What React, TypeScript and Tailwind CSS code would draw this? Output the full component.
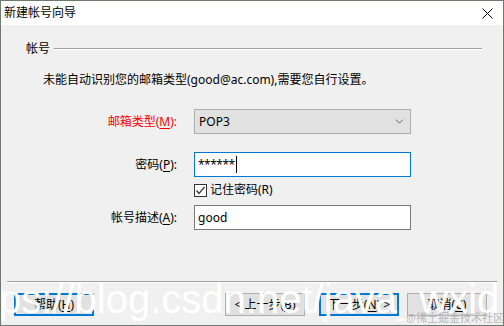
import { ChevronDown } from "lucide-react";

const ui = "font-['Noto_Sans','Noto_Sans_CJK_SC',sans-serif]";

function U({ c }: { c: string }) {
  return <span className="underline underline-offset-2">{c}</span>;
}

function Field({
  label,
  red,
  children,
}: {
  label: React.ReactNode;
  red?: boolean;
  children: React.ReactNode;
}) {
  return (
    <div className="flex items-center">
      <div
        className={`w-[176px] text-right text-[12px] leading-[16px] ${
          red ? "text-[#ff0000]" : "text-[#000]"
        }`}
      >
        {label}
      </div>
      <div className="ml-[17px] w-[217px]">{children}</div>
    </div>
  );
}

function Btn({ label, focus }: { label: React.ReactNode; focus?: boolean }) {
  return (
    <button
      className={`w-[80px] h-[23px] bg-[#e1e1e1] text-[12px] leading-[16px] text-black flex items-center justify-center ${
        focus ? "border-2 border-[#0078d7]" : "border border-[#adadad]"
      }`}
    >
      {label}
    </button>
  );
}

export default function App() {
  return (
    <div
      className={`relative w-[504px] h-[326px] overflow-hidden border border-[#6f7a6f] flex flex-col bg-[#f0f0f0] ${ui}`}
    >
      {/* title bar */}
      <div className="h-[24px] bg-white flex items-center justify-between pl-[3px] pr-[10px]">
        <span className="text-[12px] leading-[16px] text-black">新建帐号向导</span>
        <svg width="11" height="11" viewBox="0 0 11 11" className="mt-[1px]">
          <path d="M0.5 0.5 L10.5 10.5 M10.5 0.5 L0.5 10.5" stroke="#000" strokeWidth="1" />
        </svg>
      </div>

      {/* body */}
      <div className="flex-1 flex flex-col">
        <div className="mt-[16px] pl-[25px] pr-[21px] flex items-center">
          <span className="text-[12px] leading-[16px] text-black">帐号</span>
          <div className="ml-[4px] flex-1 h-[2px] border-t border-[#a0a0a0] border-b border-b-white" />
        </div>

        <div className="mt-[15px] pl-[42px] text-[12px] leading-[16px] text-black">
          未能自动识别您的邮箱类型(good@ac.com),需要您自行设置。
        </div>

        <div className="mt-[21px] flex flex-col">
          <Field
            red
            label={
              <>
                邮箱类型(<U c="M" />):
              </>
            }
          >
            <div className="h-[25px] bg-[#e1e1e1] border border-[#adadad] flex items-center justify-between pl-[4px] pr-[4px] text-[12px] text-black">
              <span>POP3</span>
              <ChevronDown className="w-[13px] h-[13px] text-[#333]" strokeWidth={1.3} />
            </div>
          </Field>

          <div className="mt-[18px]">
            <Field
              label={
                <>
                  密码(<U c="P" />):
                </>
              }
            >
              <div className="h-[25px] bg-white border border-[#0078d7] flex items-center pl-[3px] text-[12px] text-black">
                <span className="leading-none tracking-[-0.5px]">******</span>
                <span className="w-px h-[17px] bg-black ml-[1px]" />
              </div>
            </Field>
          </div>

          <div className="mt-[5px] pl-[193px] flex items-center">
            <div className="w-[13px] h-[13px] border border-[#333] bg-white flex items-center justify-center">
              <svg width="11" height="11" viewBox="0 0 11 11">
                <path d="M1.5 5.5 L4 8.5 L9.5 2" fill="none" stroke="#333" strokeWidth="1.2" />
              </svg>
            </div>
            <span className="ml-[3px] text-[12px] leading-[16px] text-black">记住密码(R)</span>
          </div>

          <div className="mt-[7px]">
            <Field
              label={
                <>
                  帐号描述(<U c="A" />):
                </>
              }
            >
              <div className="h-[25px] bg-white border border-[#7a7a7a] flex items-center pl-[3px] text-[12px] text-black">
                good
              </div>
            </Field>
          </div>
        </div>

        {/* footer */}
        <div className="mt-auto pl-[6px] pr-[6px]">
          <div className="h-[2px] border-t border-[#a0a0a0] border-b border-b-white" />
        </div>
        <div className="mt-[10px] mb-[9px] pl-[13px] pr-[16px] flex items-center">
          <Btn
            focus
            label={
              <>
                帮助(<U c="H" />)
              </>
            }
          />
          <div className="flex-1" />
          <Btn
            label={
              <>
                &lt; 上一步(<U c="B" />)
              </>
            }
          />
          <div className="w-[14px]" />
          <Btn
            focus
            label={
              <>
                下一步(<U c="N" />) &gt;
              </>
            }
          />
          <div className="w-[8px]" />
          <Btn
            label={
              <>
                取消(<U c="C" />)
              </>
            }
          />
        </div>
      </div>

      {/* watermark */}
      <div className="absolute left-[-2px] top-[278px] whitespace-nowrap text-white text-[40px] leading-none font-['Liberation_Sans',sans-serif] pointer-events-none">
        ps://blog.csdn.net/java_wxid
      </div>
      <div className="absolute left-[405px] top-[310px] whitespace-nowrap text-[#b8b8b8] text-[11px] leading-[14px] pointer-events-none">
        @稀土掘金技术社区
      </div>
    </div>
  );
}
